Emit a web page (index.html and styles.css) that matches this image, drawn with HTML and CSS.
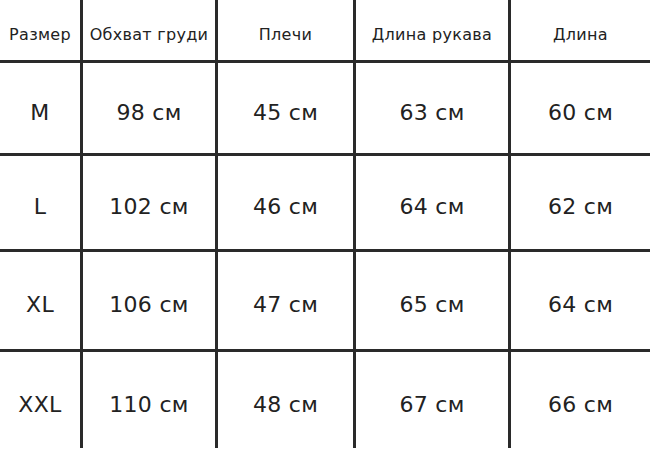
FILE: index.html
```html
<!DOCTYPE html>
<html lang="ru">
<head>
<meta charset="utf-8">
<link rel="stylesheet" href="styles.css">
</head>
<body>
<div class="chart">
  <div class="cell head">Размер</div>
  <div class="cell head">Обхват груди</div>
  <div class="cell head">Плечи</div>
  <div class="cell head">Длина рукава</div>
  <div class="cell head">Длина</div>

  <div class="cell r1">M</div>
  <div class="cell r1">98 см</div>
  <div class="cell r1">45 см</div>
  <div class="cell r1">63 см</div>
  <div class="cell r1">60 см</div>

  <div class="cell r2">L</div>
  <div class="cell r2">102 см</div>
  <div class="cell r2">46 см</div>
  <div class="cell r2">64 см</div>
  <div class="cell r2">62 см</div>

  <div class="cell r3">XL</div>
  <div class="cell r3">106 см</div>
  <div class="cell r3">47 см</div>
  <div class="cell r3">65 см</div>
  <div class="cell r3">64 см</div>

  <div class="cell r4">XXL</div>
  <div class="cell r4">110 см</div>
  <div class="cell r4">48 см</div>
  <div class="cell r4">67 см</div>
  <div class="cell r4">66 см</div>
</div>
</body>
</html>
```
FILE: styles.css
```css
html, body {
  margin: 0;
  padding: 0;
  background: #ffffff;
}
body {
  width: 650px;
  height: 450px;
  overflow: hidden;
  font-family: "DejaVu Sans", "Noto Sans", sans-serif;
  color: #222222;
}
.chart {
  display: grid;
  grid-template-columns: 80px 132px 135px 152px 139px;
  grid-template-rows: 60px 90px 93px 97px 96px;
  gap: 3px;
  background: #2a2a2a;
  width: 650px;
}
.cell {
  background: #ffffff;
  display: flex;
  align-items: center;
  justify-content: center;
  font-size: 22px;
  letter-spacing: 0.3px;
  padding-top: 8px;
  box-sizing: border-box;
  white-space: nowrap;
}
.head {
  font-size: 16px;
  letter-spacing: 0.3px;
  padding-top: 8px;
}
```
